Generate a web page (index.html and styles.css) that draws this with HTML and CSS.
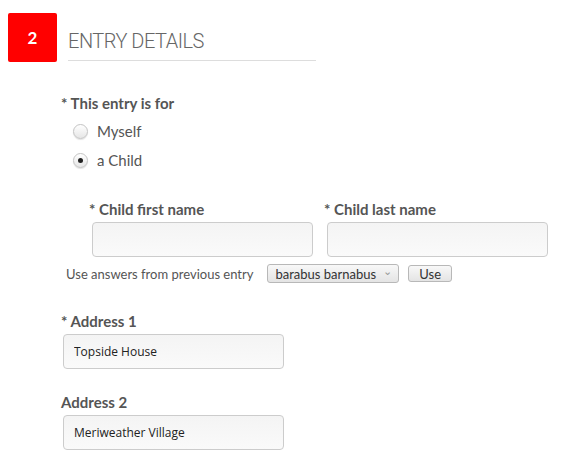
FILE: index.html
```html
<!DOCTYPE html>
<html lang="en">
<head>
    <meta charset="UTF-8">
    <title>Entry Details</title>
    <link rel="stylesheet" href="styles.css">
</head>
<body>
    <div class="section-head">
        <div class="step-num">2</div>
        <h2 class="step-title">ENTRY DETAILS</h2>
    </div>

    <form class="entry-form">
        <div class="field">
            <label class="field-label">* This entry is for</label>
            <div class="radio-row first">
                <input type="radio" name="entryFor" id="myself">
                <label for="myself">Myself</label>
            </div>
            <div class="radio-row">
                <input type="radio" name="entryFor" id="child" checked>
                <label for="child">a Child</label>
            </div>
        </div>

        <div class="child-names">
            <div class="name-col">
                <label class="field-label">* Child first name</label>
                <input type="text" class="text-input">
            </div>
            <div class="name-col">
                <label class="field-label">* Child last name</label>
                <input type="text" class="text-input">
            </div>
        </div>

        <div class="previous-row">
            <span>Use answers from previous entry</span>
            <span class="fake-select">barabus barnabus <span class="caret">&#8964;</span></span>
            <button type="button" class="use-btn">Use</button>
        </div>

        <div class="field address">
            <label class="field-label">* Address 1</label>
            <input type="text" class="text-input" value="Topside House">
        </div>

        <div class="field address">
            <label class="field-label">Address 2</label>
            <input type="text" class="text-input" value="Meriweather Village">
        </div>
    </form>
</body>
</html>
```

FILE: styles.css
```css
body {
    margin: 8px;
    font-family: 'Lato', 'Open Sans', sans-serif;
    color: #555555;
    background: #ffffff;
}

.section-head {
    display: flex;
    align-items: flex-start;
    margin-top: 5px;
}

.step-num {
    width: 49px;
    height: 49px;
    background-color: #ff0000;
    border-radius: 2px;
    color: #ffffff;
    font-weight: bold;
    font-size: 17px;
    display: flex;
    align-items: center;
    justify-content: center;
}

.step-title {
    margin: 0 0 0 11px;
    width: 248px;
    height: 48px;
    box-sizing: border-box;
    padding-top: 16px;
    border-bottom: 1px solid #dddddd;
    font-family: 'Roboto', sans-serif;
    font-size: 20px;
    font-weight: 300;
    letter-spacing: -0.5px;
    color: #666666;
    line-height: 24px;
}

.entry-form {
    margin-left: 53px;
    margin-top: 32px;
}

.field-label {
    display: block;
    font-weight: bold;
    font-size: 15px;
    color: #555555;
    line-height: 18px;
}

.radio-row {
    display: flex;
    align-items: center;
    margin: 11px 0 0 12px;
    font-size: 15px;
    color: #555555;
    height: 18px;
}

.radio-row.first {
    margin-top: 10px;
}

.radio-row input {
    appearance: none;
    width: 15px;
    height: 15px;
    margin: 0 9px 0 0;
    border: 1px solid #c4c4c4;
    border-radius: 50%;
    background: linear-gradient(#ffffff, #e6e6e6);
    box-shadow: 0 1px 1px rgba(0,0,0,0.12);
    display: grid;
    place-items: center;
}

.radio-row input:checked::after {
    content: "";
    width: 5px;
    height: 5px;
    border-radius: 50%;
    background: #222222;
}

.child-names {
    display: flex;
    gap: 11px;
    margin: 31px 0 0 28px;
}

.name-col .text-input {
    margin: 4px 0 0 3px;
}

.text-input {
    display: block;
    width: 221px;
    height: 35px;
    box-sizing: border-box;
    border: 1px solid #cccccc;
    border-radius: 4px;
    background: linear-gradient(#f4f4f4, #fafafa);
    padding: 0 10px;
    font-family: 'Open Sans', sans-serif;
    font-size: 12px;
    color: #222222;
    margin: 4px 0 0 2px;
}

.previous-row {
    display: flex;
    align-items: center;
    margin: 7px 0 0 5px;
    font-size: 13px;
    color: #555555;
}

.fake-select {
    margin-left: 14px;
    display: inline-flex;
    align-items: center;
    height: 17px;
    padding: 0 6px 0 7px;
    border: 1px solid #b8b8b8;
    border-radius: 3px;
    background: linear-gradient(#f8f8f8, #e4e4e4);
    color: #333333;
    font-size: 13px;
}

.caret {
    margin-left: 7px;
    color: #999999;
    font-size: 11px;
    position: relative;
    top: -3px;
}

.use-btn {
    margin-left: 9px;
    height: 17px;
    width: 44px;
    padding: 0;
    border: 1px solid #b8b8b8;
    border-radius: 3px;
    background: linear-gradient(#f8f8f8, #e4e4e4);
    font-family: 'Lato', sans-serif;
    font-size: 13px;
    color: #333333;
}

.address {
    margin-top: 29px;
}

.address + .address {
    margin-top: 24px;
}
```
